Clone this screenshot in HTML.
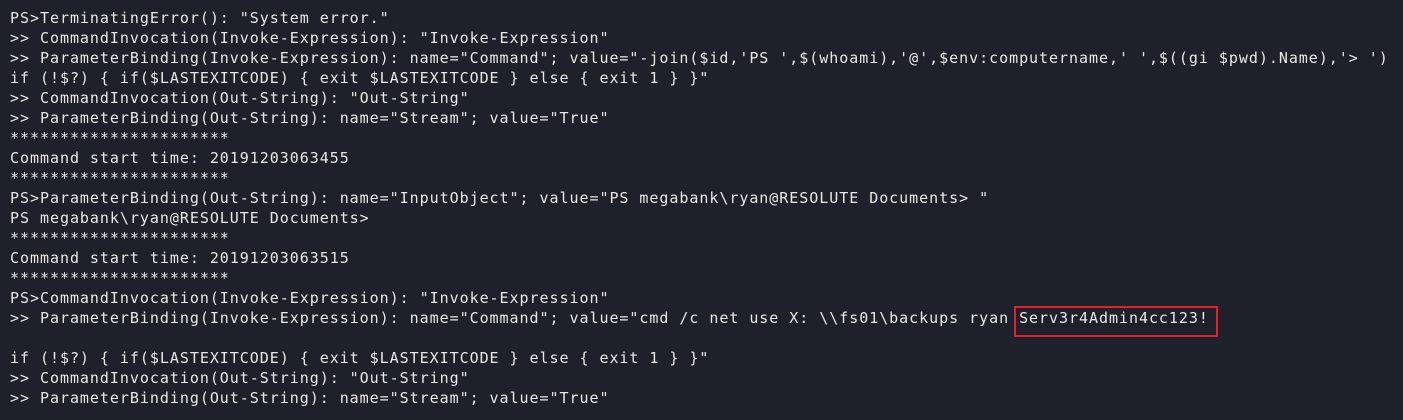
<!DOCTYPE html>
<html><head><style>
html,body{margin:0;padding:0;background:#1f212a;width:1403px;height:420px;overflow:hidden}
pre{margin:0;position:absolute;left:10px;top:8px;font-family:"DejaVu Sans Mono","Liberation Mono",monospace;font-size:15px;letter-spacing:0.96px;line-height:20px;color:#e8e8e8}
.box{position:absolute;left:1014px;top:306px;width:200px;height:27px;border:2px solid #e0202a}
</style></head><body>
<pre>PS&gt;TerminatingError(): "System error."
&gt;&gt; CommandInvocation(Invoke-Expression): "Invoke-Expression"
&gt;&gt; ParameterBinding(Invoke-Expression): name="Command"; value="-join($id,'PS ',$(whoami),'@',$env:computername,' ',$((gi $pwd).Name),'&gt; ')
if (!$?) { if($LASTEXITCODE) { exit $LASTEXITCODE } else { exit 1 } }"
&gt;&gt; CommandInvocation(Out-String): "Out-String"
&gt;&gt; ParameterBinding(Out-String): name="Stream"; value="True"
**********************
Command start time: 20191203063455
**********************
PS&gt;ParameterBinding(Out-String): name="InputObject"; value="PS megabank\ryan@RESOLUTE Documents&gt; "
PS megabank\ryan@RESOLUTE Documents&gt;
**********************
Command start time: 20191203063515
**********************
PS&gt;CommandInvocation(Invoke-Expression): "Invoke-Expression"
&gt;&gt; ParameterBinding(Invoke-Expression): name="Command"; value="cmd /c net use X: \\fs01\backups ryan Serv3r4Admin4cc123!

if (!$?) { if($LASTEXITCODE) { exit $LASTEXITCODE } else { exit 1 } }"
&gt;&gt; CommandInvocation(Out-String): "Out-String"
&gt;&gt; ParameterBinding(Out-String): name="Stream"; value="True"</pre>
<div class="box"></div>
</body></html>
